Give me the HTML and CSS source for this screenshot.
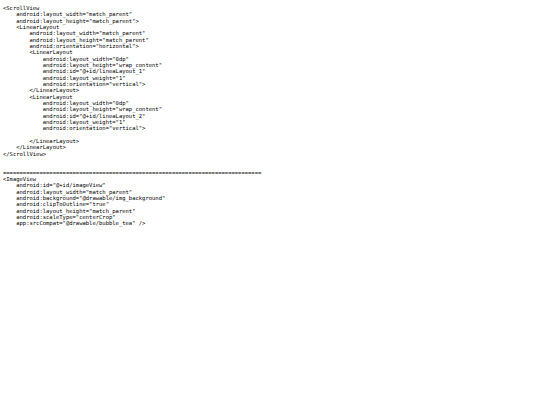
FILE: index.html
```html
<!DOCTYPE html>
<html>
<head>
<meta charset="utf-8">
<link rel="stylesheet" href="styles.css">
</head>
<body>
<pre class="code">&lt;ScrollView
    android:layout_width="match_parent"
    android:layout_height="match_parent"&gt;
    &lt;LinearLayout
        android:layout_width="match_parent"
        android:layout_height="match_parent"
        android:orientation="horizontal"&gt;
        &lt;LinearLayout
            android:layout_width="0dp"
            android:layout_height="wrap_content"
            android:id="@+id/lineaLayout_1"
            android:layout_weight="1"
            android:orientation="vertical"&gt;
        &lt;/LinearLayout&gt;
        &lt;LinearLayout
            android:layout_width="0dp"
            android:layout_height="wrap_content"
            android:id="@+id/lineaLayout_2"
            android:layout_weight="1"
            android:orientation="vertical"&gt;

        &lt;/LinearLayout&gt;
    &lt;/LinearLayout&gt;
&lt;/ScrollView&gt;


==============================================================================
&lt;ImageView
    android:id="@+id/imageView"
    android:layout_width="match_parent"
    android:background="@drawable/img_background"
    android:clipToOutline="true"
    android:layout_height="match_parent"
    android:scaleType="centerCrop"
    app:srcCompat="@drawable/bubble_tea" /&gt;</pre>
</body>
</html>
```

FILE: styles.css
```css
html, body {
  margin: 0;
  padding: 0;
  background: #ffffff;
}

.code {
  margin: 0;
  padding: 5px 3px;
  font-family: "DejaVu Sans Mono", monospace;
  font-size: 5.5px;
  line-height: 6.33px;
  color: #000000;
}
```
